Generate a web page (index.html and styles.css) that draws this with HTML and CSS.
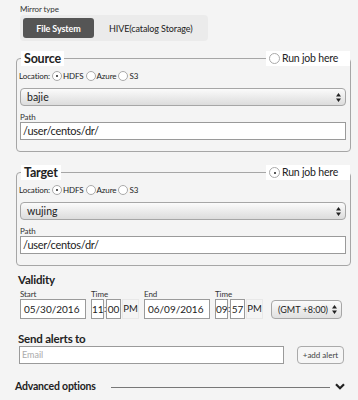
FILE: index.html
```html
<!DOCTYPE html>
<html lang="en">
  <head>
    <meta charset="UTF-8" />
    <title>Mirror Job</title>
    <link rel="stylesheet" href="styles.css">
  </head>
  <body>
    <main class="mirror-form">
      <div class="mirror-type">
        <label class="tiny-label">Mirror type</label>
        <div class="tab-group">
          <button class="tab-button active">File System</button>
          <button class="tab-button">HIVE(catalog Storage)</button>
        </div>
      </div>

      <section class="cluster-box">
        <div class="cluster-head">
          <span class="cluster-title">Source</span>
          <label class="run-here"><span class="radio"></span>Run job here</label>
        </div>
        <div class="location-row">
          <span>Location:</span>
          <label class="loc-option"><span class="radio checked"></span>HDFS</label>
          <label class="loc-option"><span class="radio"></span>Azure</label>
          <label class="loc-option"><span class="radio"></span>S3</label>
        </div>
        <div class="select-box">bajie
          <svg class="arrows" width="5" height="9" viewBox="0 0 5 9"><path d="M0 3.5 L2.5 0 L5 3.5 Z M0 5.5 L2.5 9 L5 5.5 Z" fill="#222"/></svg>
        </div>
        <label class="tiny-label path-label">Path</label>
        <div class="text-input">/user/centos/dr/</div>
      </section>

      <section class="cluster-box target">
        <div class="cluster-head">
          <span class="cluster-title">Target</span>
          <label class="run-here"><span class="radio checked"></span>Run job here</label>
        </div>
        <div class="location-row">
          <span>Location:</span>
          <label class="loc-option"><span class="radio checked"></span>HDFS</label>
          <label class="loc-option"><span class="radio"></span>Azure</label>
          <label class="loc-option"><span class="radio"></span>S3</label>
        </div>
        <div class="select-box">wujing
          <svg class="arrows" width="5" height="9" viewBox="0 0 5 9"><path d="M0 3.5 L2.5 0 L5 3.5 Z M0 5.5 L2.5 9 L5 5.5 Z" fill="#222"/></svg>
        </div>
        <label class="tiny-label path-label">Path</label>
        <div class="text-input">/user/centos/dr/</div>
      </section>

      <h3 class="section-title">Validity</h3>
      <div class="validity-row">
        <div class="field">
          <label class="tiny-label">Start</label>
          <div class="date-input">05/30/2016</div>
        </div>
        <div class="field">
          <label class="tiny-label">Time</label>
          <div class="time-group">
            <span class="time-box">11</span><span class="colon">:</span><span class="time-box">00</span><span class="ampm">PM</span>
          </div>
        </div>
        <div class="field">
          <label class="tiny-label">End</label>
          <div class="date-input">06/09/2016</div>
        </div>
        <div class="field">
          <label class="tiny-label">Time</label>
          <div class="time-group">
            <span class="time-box">09</span><span class="colon">:</span><span class="time-box">57</span><span class="ampm">PM</span>
          </div>
        </div>
        <div class="tz-select">(GMT +8:00)
          <svg class="arrows" width="5" height="9" viewBox="0 0 5 9"><path d="M0 3.5 L2.5 0 L5 3.5 Z M0 5.5 L2.5 9 L5 5.5 Z" fill="#222"/></svg>
        </div>
      </div>

      <h3 class="section-title alerts-title">Send alerts to</h3>
      <div class="alerts-row">
        <div class="text-input email">Email</div>
        <button class="add-alert">+add alert</button>
      </div>

      <div class="advanced">
        <span>Advanced options</span>
        <span class="rule"></span>
        <svg width="10" height="7" viewBox="0 0 10 7"><path d="M1 1.2 L5 5.2 L9 1.2" fill="none" stroke="#222" stroke-width="2.2"/></svg>
      </div>
    </main>
  </body>
</html>
```

FILE: styles.css
```css
* {
  margin: 0;
  padding: 0;
  box-sizing: border-box;
}

body {
  background: #f4f4f4;
  font-family: Lato, "Open Sans", sans-serif;
  color: #222;
  width: 358px;
  height: 400px;
  overflow: hidden;
  white-space: nowrap;
}

.mirror-form {
  padding: 4px 8px 0 16px;
}

.tiny-label {
  display: block;
  font-size: 8px;
  color: #333;
  line-height: 10px;
  letter-spacing: -0.1px;
}

.mirror-type {
  padding-left: 4px;
}

.tab-group {
  display: flex;
  align-items: center;
  width: 188px;
  height: 26px;
  margin-top: 1px;
  padding: 0 3px;
  background: #ebebeb;
  border-radius: 4px;
}

.tab-button {
  flex: none;
  border: none;
  background: none;
  font-family: inherit;
  font-size: 9px;
  color: #222;
  height: 20px;
  padding: 0 0 0 15px;
  border-radius: 3px;
  letter-spacing: -0.1px;
}

.tab-button.active {
  width: 71px;
  background: #555;
  color: #fff;
  font-weight: bold;
  padding: 0;
}

.cluster-box {
  margin-top: 17px;
  width: 335px;
  border: 1px solid #a6a6a6;
  border-radius: 4px;
  padding: 0 4px 11px 2px;
}

.cluster-box.target {
  margin-top: 20px;
}

.cluster-head {
  display: flex;
  justify-content: space-between;
  align-items: center;
  margin-top: -8px;
  height: 15px;
}

.cluster-title {
  background: #fff;
  font-size: 12.5px;
  font-weight: bold;
  padding: 0 3px;
  margin-left: 2px;
  line-height: 15px;
  letter-spacing: -0.2px;
}

.run-here {
  display: flex;
  align-items: center;
  gap: 2px;
  background: #fff;
  font-size: 10.5px;
  padding: 0 12px 0 3px;
  margin-right: -4px;
  line-height: 15px;
  letter-spacing: -0.2px;
}

.radio {
  display: inline-block;
  width: 10px;
  height: 10px;
  border: 1px solid #aaa;
  border-radius: 50%;
  background: #fff;
  position: relative;
}

.radio.checked::after {
  content: "";
  position: absolute;
  left: 3px;
  top: 3px;
  width: 2px;
  height: 2px;
  border-radius: 50%;
  background: #222;
}

.run-here .radio {
  width: 11px;
  height: 11px;
}

.run-here .radio.checked::after {
  left: 3.5px;
  top: 3.5px;
}

.location-row {
  display: flex;
  align-items: center;
  gap: 2px;
  font-size: 8px;
  margin-top: 4px;
  height: 12px;
  letter-spacing: -0.1px;
}

.loc-option {
  display: flex;
  align-items: center;
  gap: 1px;
}

.select-box {
  display: flex;
  justify-content: space-between;
  align-items: center;
  margin-top: 6px;
  margin-left: 1px;
  height: 18px;
  padding: 0 4px 0 6px;
  font-size: 10.5px;
  border: 1px solid #a6a6a6;
  border-radius: 4px;
  background: linear-gradient(#fbfbfb, #dcdcdc);
}

.arrows {
  flex: none;
}

.path-label {
  margin-top: 6px;
  margin-left: 1px;
}

.text-input {
  height: 18px;
  margin-left: 1px;
  border: 1px solid #9a9a9a;
  background: #fff;
  font-size: 11px;
  line-height: 16px;
  padding-left: 2px;
  letter-spacing: -0.3px;
}

.section-title {
  font-size: 11.5px;
  font-weight: bold;
  margin-top: 6px;
  padding-left: 2px;
  line-height: 15px;
  letter-spacing: -0.2px;
}

.validity-row {
  display: flex;
  align-items: flex-end;
  margin-top: 3px;
  padding-left: 4px;
  gap: 5px;
}

.field .tiny-label {
  line-height: 9px;
}

.date-input {
  width: 66px;
  height: 20px;
  border: 1px solid #9a9a9a;
  background: #fff;
  font-size: 10px;
  line-height: 18px;
  padding-left: 3px;
}

.time-group {
  display: flex;
  align-items: center;
  height: 20px;
  font-size: 10px;
}

.time-box {
  height: 20px;
  width: 13px;
  border: 1px solid #9a9a9a;
  background: #fff;
  text-align: center;
  line-height: 18px;
}

.time-box + .colon + .time-box {
  width: 15px;
}

.colon {
  width: 2px;
  font-size: 9px;
  line-height: 18px;
}

.ampm {
  height: 20px;
  width: 17px;
  margin-left: 1px;
  border: 1px solid #e8e8e8;
  text-align: center;
  line-height: 18px;
  font-size: 9.5px;
}

.tz-select {
  display: flex;
  align-items: center;
  justify-content: space-between;
  width: 71px;
  height: 19px;
  margin-left: 3px;
  padding: 0 4px 0 6px;
  font-size: 9px;
  border: 1px solid #a6a6a6;
  border-radius: 4px;
  background: linear-gradient(#fbfbfb, #e0e0e0);
}

.alerts-title {
  margin-top: 13px;
  line-height: 13px;
}

.alerts-row {
  display: flex;
  align-items: center;
  gap: 13px;
  margin-top: 1px;
  padding-left: 2px;
}

.text-input.email {
  width: 265px;
  font-size: 9px;
  color: #aaa;
  letter-spacing: 0;
}

.add-alert {
  width: 47px;
  height: 18px;
  border: 1px solid #aaa;
  border-radius: 4px;
  background: #f6f6f6;
  font-family: inherit;
  font-size: 8px;
  color: #444;
}

.advanced {
  display: flex;
  align-items: center;
  margin-top: 16px;
  margin-left: -1px;
  font-size: 10.5px;
  font-weight: bold;
  width: 330px;
  letter-spacing: -0.2px;
}

.rule {
  flex: 1;
  height: 1px;
  background: #777;
  margin: 2px 5px 0 15px;
}
```
